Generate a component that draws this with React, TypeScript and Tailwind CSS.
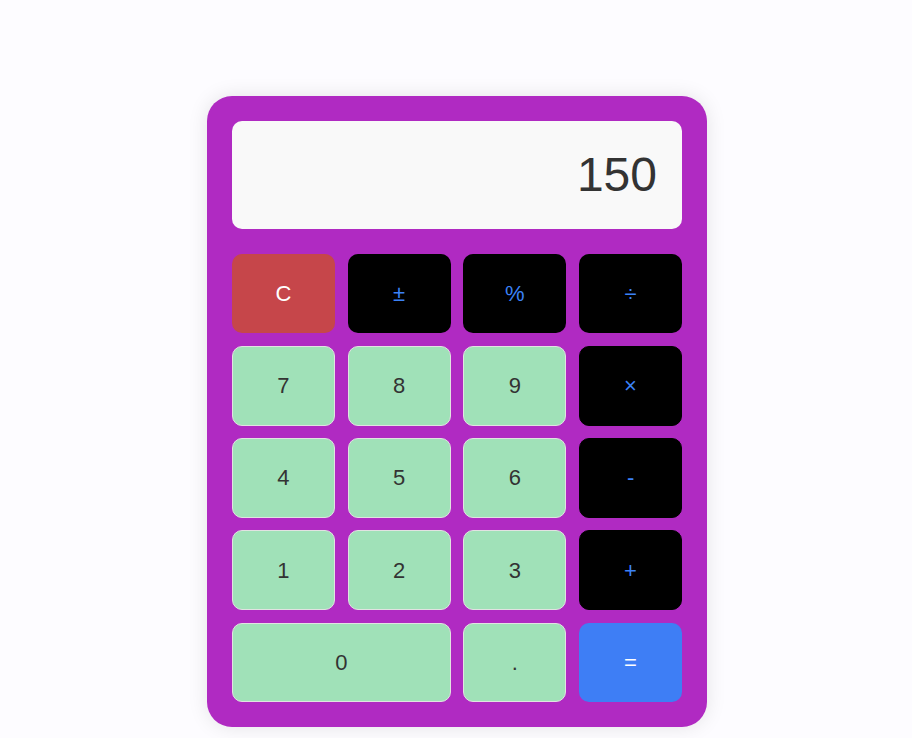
import React from "react";

type Key = { label: string; kind: "clear" | "func" | "op" | "num" | "eq"; wide?: boolean };

const KEYS: Key[] = [
  { label: "C", kind: "clear" },
  { label: "±", kind: "func" },
  { label: "%", kind: "func" },
  { label: "÷", kind: "func" },
  { label: "7", kind: "num" },
  { label: "8", kind: "num" },
  { label: "9", kind: "num" },
  { label: "×", kind: "op" },
  { label: "4", kind: "num" },
  { label: "5", kind: "num" },
  { label: "6", kind: "num" },
  { label: "-", kind: "op" },
  { label: "1", kind: "num" },
  { label: "2", kind: "num" },
  { label: "3", kind: "num" },
  { label: "+", kind: "op" },
  { label: "0", kind: "num", wide: true },
  { label: ".", kind: "num" },
  { label: "=", kind: "eq" },
];

const styles: Record<Key["kind"], string> = {
  clear: "bg-[#c6464a] text-white",
  func: "bg-black text-[#3b82f6]",
  op: "bg-black text-[#3b82f6] border border-black",
  num: "bg-[#a0e1b8] text-[#333] border border-[#e2e2e2]",
  eq: "bg-[#3e7ef5] text-white",
};

export default function App() {
  return (
    <div
      className="min-h-[738px] bg-[#fdfcff] pt-[96px] pl-[2px]"
      style={{ fontFamily: '"Liberation Sans", Arial, sans-serif' }}
    >
      <div className="mx-auto w-[500px] h-[631px] rounded-[25px] bg-[#b02ac2] p-[25px] flex flex-col gap-[25px] shadow-[0_0_20px_rgba(0,0,0,0.1)]">
        <div className="h-[108px] shrink-0 rounded-[10px] bg-[#f9f9f9] flex items-center justify-end pr-[25px] text-[48px] text-[#333]">
          150
        </div>
        <div className="flex-1 grid grid-cols-4 grid-rows-5 gap-[0.8rem]">
          {KEYS.map((k) => (
            <button
              key={k.label}
              className={`rounded-[10px] text-[22px] flex items-center justify-center ${styles[k.kind]} ${k.wide ? "col-span-2" : ""}`}
            >
              {k.label}
            </button>
          ))}
        </div>
      </div>
    </div>
  );
}
